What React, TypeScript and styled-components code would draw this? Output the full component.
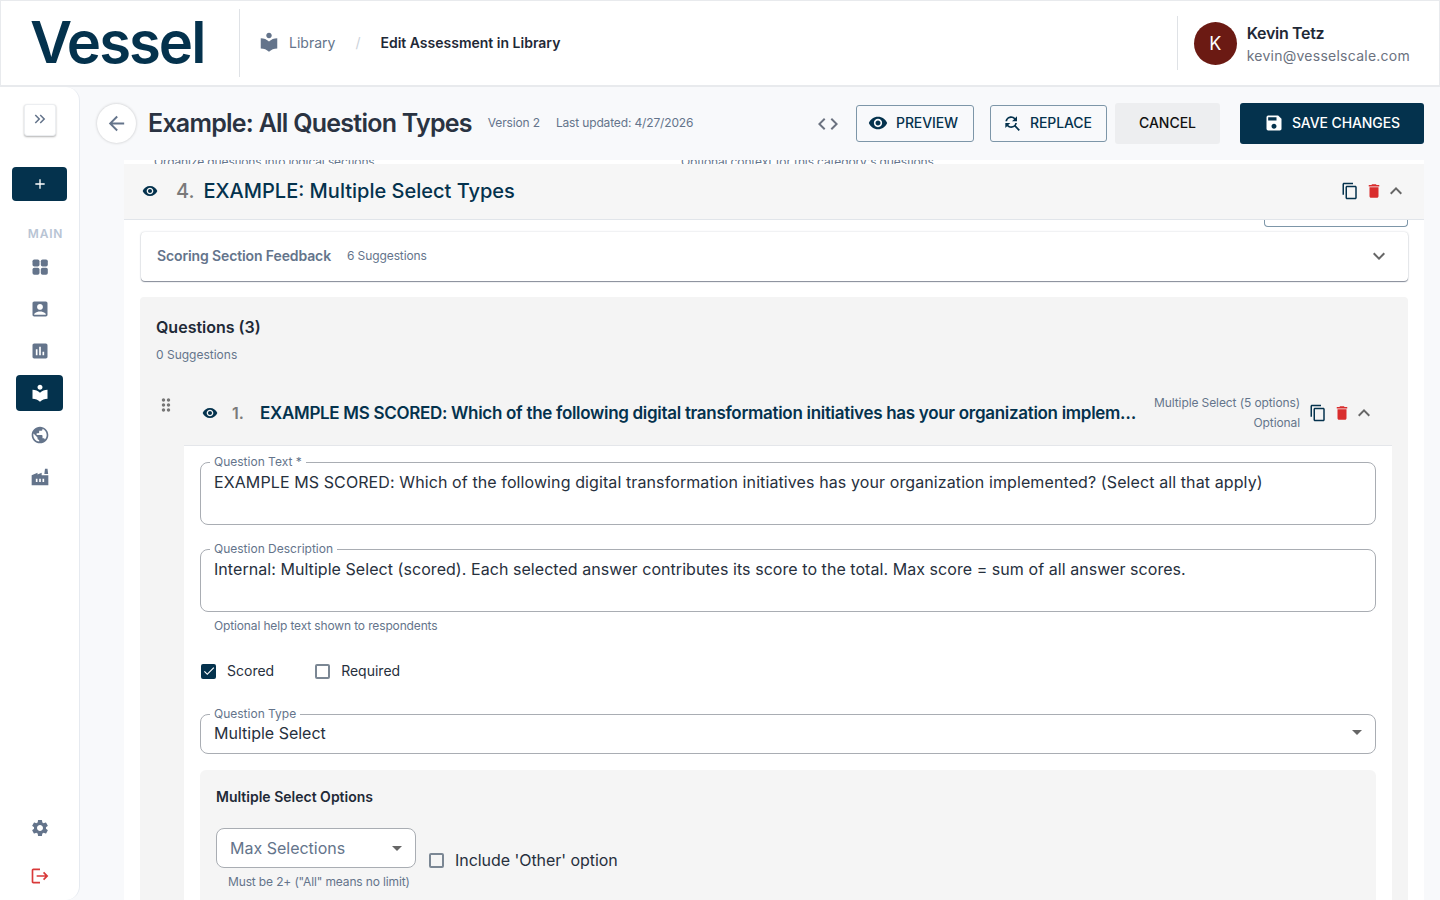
import React from "react";
import styled, { createGlobalStyle } from "styled-components";
import {
  MdAccountBox,
  MdAdd,
  MdArrowBack,
  MdAssessment,
  MdCheck,
  MdCode,
  MdContentCopy,
  MdDelete,
  MdDragIndicator,
  MdExpandLess,
  MdExpandMore,
  MdFactory,
  MdFindReplace,
  MdKeyboardDoubleArrowRight,
  MdLocalLibrary,
  MdLogout,
  MdPublic,
  MdSave,
  MdSettings,
  MdVisibility,
} from "react-icons/md";

const navy = "#04324d";
const slate = "#64748b";

const GlobalStyle = createGlobalStyle`
  html, body {
    margin: 0;
    height: 100%;
    overflow: hidden;
    background: #f8f9fb;
  }
  body {
    font-family: Inter, "Liberation Sans", sans-serif;
    color: #1f2937;
  }
  * {
    box-sizing: border-box;
  }
`;

const Page = styled.div`
  height: 900px;
  display: flex;
  flex-direction: column;
  overflow: hidden;
`;

// header
const TopBar = styled.header`
  height: 87px;
  flex: none;
  display: flex;
  align-items: center;
  background: #fff;
  border: 1px solid #e8eaed;
  border-bottom-width: 2px;
  padding: 0 29px 0 29px;
`;
const Logo = styled.div`
  width: 209px;
  color: ${navy};
  font-size: 58px;
  font-weight: 600;
  letter-spacing: -2px;
  line-height: 1;
  margin-top: -3px;
`;
const Divider = styled.div`
  width: 1px;
  height: 68px;
  background: #dfe2e6;
`;
const Crumbs = styled.nav`
  display: flex;
  align-items: center;
  margin: 0 0 2px 18px;
  font-size: 14px;
  color: ${slate};
`;
const CrumbIcon = styled.span`
  display: flex;
  font-size: 22px;
  color: ${slate};
  margin-right: 9px;
`;
const CrumbSlash = styled.span`
  color: #cbd2da;
  margin: 0 20px;
`;
const CrumbCurrent = styled.span`
  color: #1f2937;
  font-weight: 600;
`;
const UserBlock = styled.div`
  margin-left: auto;
  display: flex;
  align-items: center;
`;
const UserDivider = styled.div`
  width: 1px;
  height: 54px;
  background: #dfe2e6;
  margin-right: 16px;
`;
const Avatar = styled.div`
  width: 43px;
  height: 43px;
  border-radius: 50%;
  background: #6b1a13;
  color: #fff;
  display: flex;
  align-items: center;
  justify-content: center;
  font-size: 18px;
  margin-right: 10px;
`;
const UserText = styled.div`
  display: flex;
  flex-direction: column;
  gap: 4px;
  margin-top: 2px;
`;
const UserName = styled.div`
  font-size: 16px;
  font-weight: 600;
  line-height: 20px;
  letter-spacing: -0.3px;
`;
const UserMail = styled.div`
  font-size: 14px;
  line-height: 18px;
  letter-spacing: 0.25px;
  color: #6b7280;
`;

const Body = styled.div`
  flex: 1;
  display: flex;
  min-height: 0;
`;

// sidebar
const Sidebar = styled.aside`
  width: 80px;
  flex: none;
  background: #fff;
  border-right: 1px solid #e6eaf0;
  border-radius: 0 14px 14px 0;
  display: flex;
  flex-direction: column;
  align-items: center;
  padding: 17px 0 14px;
`;
const CollapseButton = styled.button`
  width: 32px;
  height: 32px;
  padding: 0 0 2px;
  border: 1px solid #eceef1;
  border-radius: 3px;
  background: #fff;
  color: ${slate};
  font-size: 18px;
  display: flex;
  align-items: center;
  justify-content: center;
  box-shadow: 0 1px 2px rgba(0, 0, 0, 0.3);
`;
const AddButton = styled.button`
  width: 55px;
  height: 34px;
  margin-top: 31px;
  padding: 0;
  border: 0;
  border-radius: 4px;
  background: ${navy};
  color: #fff;
  font-size: 16px;
  display: flex;
  align-items: center;
  justify-content: center;
`;
const NavTitle = styled.div`
  margin: 26px 0 0 12px;
  font-size: 12px;
  line-height: 14px;
  font-weight: 600;
  letter-spacing: 0.8px;
  color: #b8c4d4;
`;
const NavList = styled.div`
  display: flex;
  flex-direction: column;
  align-items: center;
  gap: 6px;
  margin-top: 8px;
`;
const NavItem = styled.div<{ $active?: boolean }>`
  width: 47px;
  height: 36px;
  border-radius: 4px;
  display: flex;
  align-items: center;
  justify-content: center;
  font-size: 20px;
  color: ${(p) => (p.$active ? "#fff" : slate)};
  background: ${(p) => (p.$active ? navy : "transparent")};
`;
const NavBottom = styled.div`
  margin-top: auto;
  display: flex;
  flex-direction: column;
  align-items: center;
  gap: 28px;
`;
const NavBottomIcon = styled.div<{ $danger?: boolean }>`
  display: flex;
  font-size: 20px;
  color: ${(p) => (p.$danger ? "#d93a3a" : slate)};
`;

// main area
const Main = styled.main`
  flex: 1;
  min-width: 0;
  display: flex;
  flex-direction: column;
  padding-right: 16px;
`;
const TitleRow = styled.div`
  height: 73px;
  flex: none;
  display: flex;
  align-items: center;
  padding: 0 0 0 17px;
`;
const BackButton = styled.button`
  width: 39px;
  height: 39px;
  padding: 0;
  border: 0;
  border-radius: 50%;
  background: #fff;
  color: ${slate};
  font-size: 23px;
  display: flex;
  align-items: center;
  justify-content: center;
  box-shadow: 0 0 3px rgba(0, 0, 0, 0.22);
  margin-right: 12px;
`;
const PageTitle = styled.h1`
  margin: 0 0 2px;
  font-size: 25px;
  font-weight: 600;
  letter-spacing: -0.75px;
  color: #2a3342;
`;
const Meta = styled.span`
  font-size: 12px;
  letter-spacing: -0.15px;
  color: ${slate};
  margin: 0 0 2px 16px;
`;
const Actions = styled.div`
  margin-left: auto;
  display: flex;
  align-items: center;
`;
const CodeToggle = styled.span`
  display: flex;
  font-size: 24px;
  color: #6b7280;
  margin-right: 16px;
`;
const OutlineButton = styled.button<{ $width: number }>`
  width: ${(p) => p.$width}px;
  height: 37px;
  padding: 0 0 2px 11px;
  border: 1px solid #7d96a8;
  border-radius: 3px;
  background: transparent;
  color: ${navy};
  font: 500 14px Inter, sans-serif;
  letter-spacing: -0.1px;
  display: flex;
  align-items: center;
  gap: 8px;
  margin-right: 16px;
`;
const ButtonIcon = styled.span`
  display: flex;
  font-size: 20px;
`;
const CancelButton = styled.button`
  width: 105px;
  height: 41px;
  margin-left: -8px;
  margin-right: 20px;
  padding: 0 0 2px;
  border: 0;
  border-radius: 3px;
  background: #edeef0;
  color: #111;
  font: 500 14px Inter, sans-serif;
`;
const SaveButton = styled.button`
  width: 184px;
  height: 41px;
  padding: 0 0 2px;
  border: 0;
  border-radius: 3px;
  background: ${navy};
  color: #fff;
  font: 500 14px Inter, sans-serif;
  letter-spacing: -0.08px;
  display: flex;
  align-items: center;
  justify-content: center;
  gap: 8px;
`;

// editor panel
const Editor = styled.div`
  flex: 1;
  min-height: 0;
  margin-left: 44px;
  background: #fff;
  overflow: hidden;
  display: flex;
  flex-direction: column;
`;
const PeekRow = styled.div`
  height: 4px;
  flex: none;
  overflow: hidden;
  display: flex;
  font-size: 12px;
  line-height: 4px;
  letter-spacing: -0.12px;
  color: ${slate};
  padding-left: 30px;
`;
const PeekText = styled.span<{ $width: number }>`
  width: ${(p) => p.$width}px;
  white-space: nowrap;
`;
const SectionBar = styled.div`
  height: 56px;
  flex: none;
  display: flex;
  align-items: center;
  background: #f6f6f6;
  border-bottom: 1px solid #e1e5ea;
  padding: 0 16px 1px 18px;
`;
const EyeIcon = styled.span`
  display: flex;
  font-size: 16px;
  color: ${navy};
`;
const SectionNumber = styled.span`
  font-size: 20px;
  font-weight: 500;
  color: #7a7a7a;
  margin: 0 9px 1px 18px;
`;
const SectionName = styled.span`
  font-size: 20px;
  font-weight: 500;
  color: ${navy};
  margin-bottom: 1px;
`;
const RowTools = styled.div`
  margin-left: auto;
  display: flex;
  align-items: center;
  gap: 6px;
`;
const Tool = styled.span<{ $tone: "navy" | "red" }>`
  display: flex;
  font-size: 18px;
  color: ${(p) => (p.$tone === "navy" ? navy : "#d92d2d")};
`;
const CollapseTool = styled.span`
  display: flex;
  font-size: 24px;
  color: #666;
  margin-left: -5px;
`;
const EditorScroll = styled.div`
  padding: 0 16px;
  display: flex;
  flex-direction: column;
`;
const PeekButtonRow = styled.div`
  height: 7px;
  display: flex;
  justify-content: flex-end;
`;
const PeekButton = styled.div`
  width: 144px;
  height: 7px;
  border: 1px solid #7d96a8;
  border-top: 0;
  border-radius: 0 0 4px 4px;
`;
const FeedbackCard = styled.div`
  height: 49px;
  margin: 5px 0 16px 1px;
  display: flex;
  align-items: center;
  padding: 0 17px 2px 16px;
  background: #fff;
  border-radius: 4px;
  box-shadow: 0 1px 1px rgba(60, 70, 90, 0.6), 0 0 2px rgba(60, 70, 90, 0.25);
`;
const FeedbackTitle = styled.span`
  font-size: 14px;
  font-weight: 600;
  letter-spacing: -0.12px;
  color: ${slate};
`;
const FeedbackCount = styled.span`
  font-size: 12px;
  letter-spacing: -0.1px;
  color: ${slate};
  margin-left: 16px;
`;
const FeedbackChevron = styled.span`
  margin-left: auto;
  display: flex;
  font-size: 24px;
  color: #666;
`;
const QuestionsPanel = styled.section`
  background: #f4f4f4;
  border-radius: 4px;
  padding: 19px 16px 0;
  display: flex;
  flex-direction: column;
`;
const QuestionsTitle = styled.div`
  font-size: 16px;
  line-height: 22px;
  font-weight: 600;
  color: #1f2a37;
`;
const QuestionsCount = styled.div`
  font-size: 12px;
  line-height: 16px;
  color: ${slate};
  margin-top: 9px;
`;
const QuestionRow = styled.div`
  height: 62px;
  margin-top: 20px;
  padding-bottom: 2px;
  display: flex;
  align-items: center;
`;
const DragHandle = styled.span`
  width: 20px;
  margin-bottom: 17px;
  display: flex;
  font-size: 20px;
  color: #777;
`;
const QuestionEye = styled(EyeIcon)`
  margin-left: 26px;
`;
const QuestionNumber = styled.span`
  width: 28px;
  margin-left: 14px;
  font-size: 16px;
  font-weight: 600;
  color: #7a7a7a;
`;
const QuestionName = styled.span`
  width: 879px;
  font-size: 17px;
  font-weight: 600;
  letter-spacing: -0.3px;
  color: ${navy};
  white-space: nowrap;
  overflow: hidden;
  text-overflow: ellipsis;
`;
const QuestionMeta = styled.div`
  width: 161px;
  text-align: right;
  font-size: 12px;
  line-height: 20px;
  letter-spacing: -0.1px;
  color: ${slate};
`;
const QuestionTools = styled.div`
  margin-left: 9px;
  display: flex;
  align-items: center;
  gap: 6px;
`;
const QuestionForm = styled.div`
  margin-left: 28px;
  background: #fff;
  border-top: 1px solid #e4e6ea;
  padding: 11px 16px 0;
  display: flex;
  flex-direction: column;
`;
const Field = styled.fieldset<{ $height: number; $top?: number }>`
  margin: ${(p) => p.$top ?? 0}px 0 0;
  height: ${(p) => p.$height}px;
  padding: 0 13px;
  border: 1px solid #a9adb3;
  border-radius: 8px;
  min-width: 0;
  position: relative;
  font-size: 16px;
  line-height: 24px;
  color: #27303d;
`;
const FieldLabel = styled.legend`
  margin-left: -4px;
  padding: 0 4px;
  font-size: 12px;
  line-height: 10px;
  color: ${slate};
`;
const FieldValue = styled.div<{ $top?: number; $spacing?: number }>`
  margin-top: ${(p) => p.$top ?? 3}px;
  letter-spacing: ${(p) => p.$spacing ?? 0}px;
  white-space: nowrap;
`;
const SelectCaret = styled.span`
  position: absolute;
  right: 13px;
  top: 50%;
  margin-top: -2px;
  border-left: 5px solid transparent;
  border-right: 5px solid transparent;
  border-top: 5px solid #666;
`;
const HelpText = styled.div<{ $left?: number }>`
  font-size: 12px;
  line-height: 16px;
  letter-spacing: -0.14px;
  color: ${slate};
  margin: 6px 0 0 ${(p) => p.$left ?? 14}px;
`;
const CheckRow = styled.div`
  display: flex;
  align-items: center;
  gap: 41px;
  margin: 27px 0 0 1px;
`;
const CheckItem = styled.label`
  display: flex;
  align-items: center;
  gap: 11px;
  font-size: 14px;
  line-height: 20px;
  color: #27303d;
`;
const Box = styled.span<{ $checked?: boolean }>`
  width: 15px;
  height: 15px;
  flex: none;
  border: ${(p) => (p.$checked ? "0" : "2px solid #7b8794")};
  border-radius: 2px;
  background: ${(p) => (p.$checked ? navy : "transparent")};
  color: #fff;
  font-size: 14px;
  display: flex;
  align-items: center;
  justify-content: center;
`;
const OptionsPanel = styled.div`
  margin-top: 16px;
  background: #f5f5f5;
  border-radius: 6px 6px 0 0;
  padding: 18px 16px 40px;
`;
const OptionsTitle = styled.div`
  font-size: 14px;
  line-height: 18px;
  font-weight: 600;
  color: #1f2a37;
`;
const OptionsRow = styled.div`
  display: flex;
  align-items: flex-start;
  margin-top: 22px;
`;
const MaxColumn = styled.div`
  width: 200px;
`;
const MaxSelect = styled.div`
  height: 40px;
  padding: 0 13px;
  display: flex;
  align-items: center;
  position: relative;
  border: 1px solid #a9adb3;
  border-radius: 8px;
  background: #fff;
  font-size: 16px;
  color: ${slate};
`;
const OtherOption = styled(CheckItem)`
  margin: 22px 0 0 13px;
  font-size: 16px;
  letter-spacing: -0.05px;
`;

const GridIcon = () => (
  <svg width="1em" height="1em" viewBox="0 0 20 20" fill="currentColor">
    <rect x="2.5" y="2.5" width="7" height="7" rx="1.8" />
    <rect x="10.8" y="2.5" width="7" height="7" rx="1.8" />
    <rect x="2.5" y="10.8" width="7" height="7" rx="1.8" />
    <rect x="10.8" y="10.8" width="7" height="7" rx="1.8" />
  </svg>
);

const navIcons = [
  { icon: <GridIcon />, active: false },
  { icon: <MdAccountBox />, active: false },
  { icon: <MdAssessment />, active: false },
  { icon: <MdLocalLibrary />, active: true },
  { icon: <MdPublic />, active: false },
  { icon: <MdFactory />, active: false },
];

const App = (): JSX.Element => {
  return (
    <Page>
      <GlobalStyle />
      <TopBar>
        <Logo>Vessel</Logo>
        <Divider />
        <Crumbs>
          <CrumbIcon>
            <MdLocalLibrary />
          </CrumbIcon>
          Library
          <CrumbSlash>/</CrumbSlash>
          <CrumbCurrent>Edit Assessment in Library</CrumbCurrent>
        </Crumbs>
        <UserBlock>
          <UserDivider />
          <Avatar>K</Avatar>
          <UserText>
            <UserName>Kevin Tetz</UserName>
            <UserMail>kevin@vesselscale.com</UserMail>
          </UserText>
        </UserBlock>
      </TopBar>
      <Body>
        <Sidebar>
          <CollapseButton>
            <MdKeyboardDoubleArrowRight />
          </CollapseButton>
          <AddButton>
            <MdAdd />
          </AddButton>
          <NavTitle>MAIN</NavTitle>
          <NavList>
            {navIcons.map((n, i) => (
              <NavItem key={i} $active={n.active}>
                {n.icon}
              </NavItem>
            ))}
          </NavList>
          <NavBottom>
            <NavBottomIcon>
              <MdSettings />
            </NavBottomIcon>
            <NavBottomIcon $danger>
              <MdLogout />
            </NavBottomIcon>
          </NavBottom>
        </Sidebar>
        <Main>
          <TitleRow>
            <BackButton>
              <MdArrowBack />
            </BackButton>
            <PageTitle>Example: All Question Types</PageTitle>
            <Meta>Version 2</Meta>
            <Meta>Last updated: 4/27/2026</Meta>
            <Actions>
              <CodeToggle>
                <MdCode />
              </CodeToggle>
              <OutlineButton $width={118}>
                <ButtonIcon>
                  <MdVisibility />
                </ButtonIcon>
                PREVIEW
              </OutlineButton>
              <OutlineButton $width={117}>
                <ButtonIcon>
                  <MdFindReplace />
                </ButtonIcon>
                REPLACE
              </OutlineButton>
              <CancelButton>CANCEL</CancelButton>
              <SaveButton>
                <ButtonIcon>
                  <MdSave />
                </ButtonIcon>
                SAVE CHANGES
              </SaveButton>
            </Actions>
          </TitleRow>
          <Editor>
            <PeekRow>
              <PeekText $width={527}>Organize questions into logical sections</PeekText>
              <PeekText $width={300}>Optional context for this category's questions</PeekText>
            </PeekRow>
            <SectionBar>
              <EyeIcon>
                <MdVisibility />
              </EyeIcon>
              <SectionNumber>4.</SectionNumber>
              <SectionName>EXAMPLE: Multiple Select Types</SectionName>
              <RowTools>
                <Tool $tone="navy">
                  <MdContentCopy />
                </Tool>
                <Tool $tone="red">
                  <MdDelete />
                </Tool>
                <CollapseTool>
                  <MdExpandLess />
                </CollapseTool>
              </RowTools>
            </SectionBar>
            <EditorScroll>
              <PeekButtonRow>
                <PeekButton />
              </PeekButtonRow>
              <FeedbackCard>
                <FeedbackTitle>Scoring Section Feedback</FeedbackTitle>
                <FeedbackCount>6 Suggestions</FeedbackCount>
                <FeedbackChevron>
                  <MdExpandMore />
                </FeedbackChevron>
              </FeedbackCard>
              <QuestionsPanel>
                <QuestionsTitle>Questions (3)</QuestionsTitle>
                <QuestionsCount>0 Suggestions</QuestionsCount>
                <QuestionRow>
                  <DragHandle>
                    <MdDragIndicator />
                  </DragHandle>
                  <QuestionEye>
                    <MdVisibility />
                  </QuestionEye>
                  <QuestionNumber>1.</QuestionNumber>
                  <QuestionName>
                    EXAMPLE MS SCORED: Which of the following digital transformation initiatives has your organization implemented? (Select all that apply)
                  </QuestionName>
                  <QuestionMeta>
                    Multiple Select (5 options)
                    <br />
                    Optional
                  </QuestionMeta>
                  <QuestionTools>
                    <Tool $tone="navy">
                      <MdContentCopy />
                    </Tool>
                    <Tool $tone="red">
                      <MdDelete />
                    </Tool>
                    <CollapseTool>
                      <MdExpandLess />
                    </CollapseTool>
                  </QuestionTools>
                </QuestionRow>
                <QuestionForm>
                  <Field $height={68}>
                    <FieldLabel>Question Text *</FieldLabel>
                    <FieldValue $spacing={0.1}>
                      EXAMPLE MS SCORED: Which of the following digital transformation initiatives has your organization implemented? (Select all that apply)
                    </FieldValue>
                  </Field>
                  <Field $height={68} $top={19}>
                    <FieldLabel>Question Description</FieldLabel>
                    <FieldValue $spacing={0.055}>
                      Internal: Multiple Select (scored). Each selected answer contributes its score to the total. Max score = sum of all answer scores.
                    </FieldValue>
                  </Field>
                  <HelpText>Optional help text shown to respondents</HelpText>
                  <CheckRow>
                    <CheckItem>
                      <Box $checked>
                        <MdCheck />
                      </Box>
                      Scored
                    </CheckItem>
                    <CheckItem>
                      <Box />
                      Required
                    </CheckItem>
                  </CheckRow>
                  <Field $height={45} $top={28}>
                    <FieldLabel>Question Type</FieldLabel>
                    <FieldValue $top={2}>Multiple Select</FieldValue>
                    <SelectCaret />
                  </Field>
                  <OptionsPanel>
                    <OptionsTitle>Multiple Select Options</OptionsTitle>
                    <OptionsRow>
                      <MaxColumn>
                        <MaxSelect>
                          Max Selections
                          <SelectCaret />
                        </MaxSelect>
                        <HelpText $left={12}>Must be 2+ ("All" means no limit)</HelpText>
                      </MaxColumn>
                      <OtherOption>
                        <Box />
                        Include 'Other' option
                      </OtherOption>
                    </OptionsRow>
                  </OptionsPanel>
                </QuestionForm>
              </QuestionsPanel>
            </EditorScroll>
          </Editor>
        </Main>
      </Body>
    </Page>
  );
};

export default App;
